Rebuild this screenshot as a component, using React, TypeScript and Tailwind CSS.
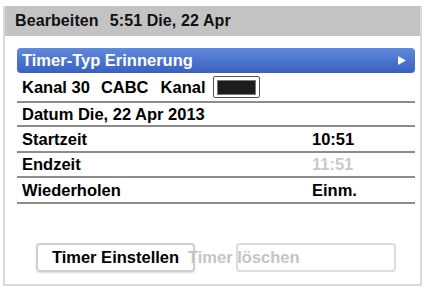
import React from "react";

const font = { fontFamily: '"Liberation Sans", Arial, sans-serif' };

function Row({ label, value, valueClass = "text-black", h }: { label: React.ReactNode; value?: string; valueClass?: string; h: string }) {
  return (
    <div className={`flex items-center border-b-2 border-[#8c8c8c] ${h}`}>
      <div className="pl-[5px] w-[295px] text-black">{label}</div>
      {value && <div className={valueClass}>{value}</div>}
    </div>
  );
}

export default function App() {
  return (
    <div className="w-[428px] h-[290px] bg-white pt-[6px] pl-[3px] pr-[6px] pb-[4px]" style={font}>
      <div className="w-[419px] h-[280px] border-x-2 border-b-2 border-[#d9d9d9] flex flex-col">
        <div className="h-[30px] bg-[#c3c3c3] flex items-center pl-[10px] text-[16px] font-bold text-[#111] tracking-[0.1px]">
          <span>Bearbeiten</span>
          <span className="ml-[11px]">5:51 Die, 22 Apr</span>
        </div>
        <div className="pl-[12px] pr-[5px] pt-[12px] text-[16.5px] font-bold flex flex-col">
          <div className="h-[25px] rounded-[4px] bg-gradient-to-b from-[#6189dc] to-[#3860c2] flex items-center justify-between pl-[5px] pr-[9px] text-white">
            <span>Timer-Typ Erinnerung</span>
            <svg width="8" height="9" viewBox="0 0 8 9"><polygon points="0,0 8,4.5 0,9" fill="#ffffff" /></svg>
          </div>
          <div className="h-[30px] flex items-center border-b-2 border-[#8c8c8c] pl-[5px] text-black">
            <span>Kanal 30</span>
            <span className="ml-[11px]">CABC</span>
            <span className="ml-[12px]">Kanal</span>
            <div className="ml-[8px] w-[47px] h-[22px] border-[1.5px] border-[#555] rounded-[2px] bg-white flex items-center justify-center">
              <div className="w-[39px] h-[15px] border border-[#777] bg-[#1c1c1c]" />
            </div>
          </div>
          <Row h="h-[24px]" label="Datum Die, 22 Apr 2013" />
          <Row h="h-[26px]" label="Startzeit" value="10:51" />
          <Row h="h-[25px]" label="Endzeit" value="11:51" valueClass="text-[#c9c9c9]" />
          <Row h="h-[26px]" label="Wiederholen" value="Einm." />
        </div>
        <div className="flex pl-[31px] mt-[39px]">
          <div className="w-[159px] h-[29px] border-2 border-[#cfcfcf] rounded-[4px] shadow-[0_1px_2px_rgba(0,0,0,0.15)] flex items-center justify-center text-[16.5px] font-bold text-black">
            Timer Einstellen
          </div>
          <div className="ml-[41px] w-[160px] h-[29px] border-2 border-[#dcdcdc] rounded-[4px] flex items-center text-[16.5px] font-bold text-[#c4c4c4] whitespace-nowrap relative z-10">
            <span className="-ml-[50px]">Timer löschen</span>
          </div>
        </div>
      </div>
    </div>
  );
}
